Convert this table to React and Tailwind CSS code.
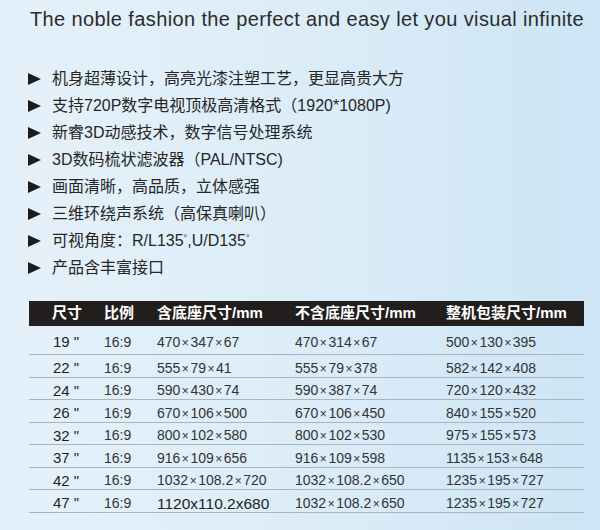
const features = [
  "机身超薄设计，高亮光漆注塑工艺，更显高贵大方",
  "支持720P数字电视顶极高清格式（1920*1080P)",
  "新睿3D动感技术，数字信号处理系统",
  "3D数码梳状滤波器（PAL/NTSC)",
  "画面清晰，高品质，立体感强",
  "三维环绕声系统（高保真喇叭）",
  null,
  "产品含丰富接口",
]

const rows = [
  ["19", "470×347×67", "470×314×67", "500×130×395"],
  ["22", "555×79×41", "555×79×378", "582×142×408"],
  ["24", "590×430×74", "590×387×74", "720×120×432"],
  ["26", "670×106×500", "670×106×450", "840×155×520"],
  ["32", "800×102×580", "800×102×530", "975×155×573"],
  ["37", "916×109×656", "916×109×598", "1135×153×648"],
  ["42", "1032×108.2×720", "1032×108.2×650", "1235×195×727"],
  ["47", "1120x110.2x680", "1032×108.2×650", "1235×195×727"],
]

// 把 "×" 拆开，两边留点空
const Dims = ({ text }) => {
  const parts = text.split("×")
  return (
    <span>
      {parts.map((p, i) => (
        <span key={i}>
          {i > 0 && <span className="mx-[1.5px] text-[12px]">×</span>}
          {p}
        </span>
      ))}
    </span>
  )
}

const Arrow = () => (
  <svg width="13" height="12" viewBox="0 0 13 12" className="mr-[11px] shrink-0">
    <polygon points="0,0 13,6 0,12" fill="#1c1c1c" />
  </svg>
)

const App = () => {
  return (
    <div
      className="w-[600px] h-[530px] overflow-hidden bg-gradient-to-r from-[#e5f1fa] via-[#dcedf8] to-[#cde5f5] text-[#262626]"
      style={{ fontFamily: '"Liberation Sans", "Noto Sans CJK SC", sans-serif' }}
    >
      {/* 标题 */}
      <div className="pt-[9px] pl-[30px] text-[20px] leading-[20px] tracking-[0.38px] text-[#2b2b2b] whitespace-nowrap">
        The noble fashion the perfect and easy let you visual infinite
      </div>

      {/* 卖点列表 */}
      <ul className="mt-[36px] pl-[28px] text-[16px]">
        {features.map((f, i) => (
          <li key={i} className="h-[27px] flex items-center">
            <Arrow />
            {f ?? (
              <span>
                可视角度：R/L135<sup className="text-[9px]">°</sup>,U/D135<sup className="text-[9px]">°</sup>
              </span>
            )}
          </li>
        ))}
      </ul>

      {/* 尺寸表 */}
      <div className="mt-[20px] ml-[29px] w-[555px]">
        <div className="h-[25px] bg-[#221e1d] text-white font-bold text-[15px] grid grid-cols-[75px_53px_138px_151px_1fr] items-center">
          <span className="pl-[23px]">尺寸</span>
          <span>比例</span>
          <span>含底座尺寸/mm</span>
          <span>不含底座尺寸/mm</span>
          <span>整机包装尺寸/mm</span>
        </div>
        {rows.map((r, i) => (
          <div
            key={r[0]}
            className={`grid grid-cols-[75px_53px_138px_151px_1fr] items-center border-b border-[#a9b4bd] text-[14px] text-[#333] ${
              i === 0 ? "h-[29px] pt-[5px]" : "h-[22.5px] pt-[2px]"
            }`}
          >
            <span className="pl-[24px] text-[15px] text-[#1f1f1f]">
              {r[0]}
              <span className="ml-[4px]">"</span>
            </span>
            <span>16:9</span>
            <span className={i === 7 ? "text-[15.5px] text-[#1f1f1f]" : ""}>
              <Dims text={r[1]} />
            </span>
            <span>
              <Dims text={r[2]} />
            </span>
            <span>
              <Dims text={r[3]} />
            </span>
          </div>
        ))}
      </div>
    </div>
  )
}

export default App
